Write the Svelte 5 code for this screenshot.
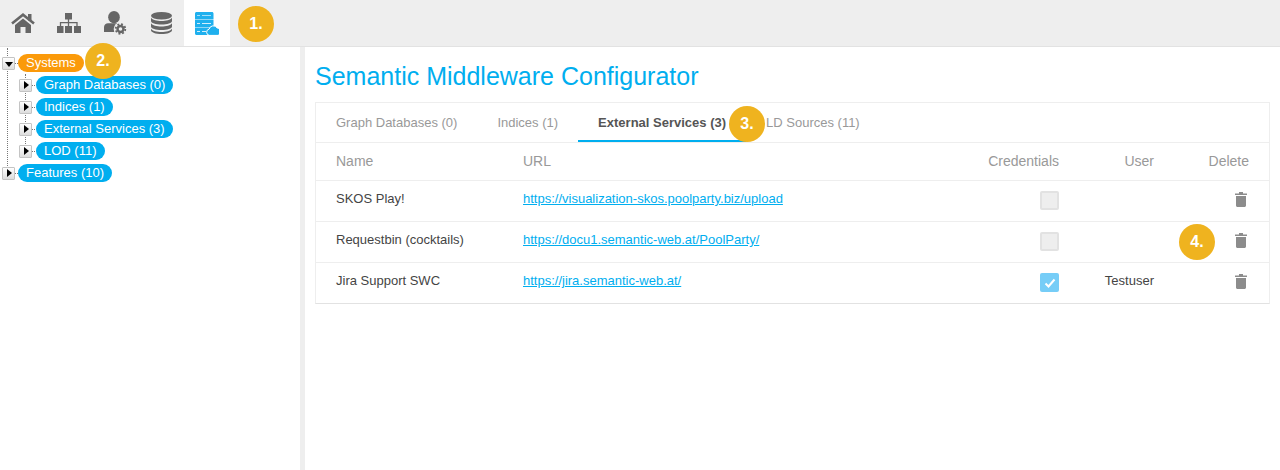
<script>
	const subs = ['Graph Databases (0)', 'Indices (1)', 'External Services (3)', 'LOD (11)'];
	const tabs = ['Graph Databases (0)', 'Indices (1)', 'External Services (3)', 'LD Sources (11)'];
	const rows = [
		{ name: 'SKOS Play!', url: 'https://visualization-skos.poolparty.biz/upload', cred: false, user: '' },
		{ name: 'Requestbin (cocktails)', url: 'https://docu1.semantic-web.at/PoolParty/', cred: false, user: '' },
		{ name: 'Jira Support SWC', url: 'https://jira.semantic-web.at/', cred: true, user: 'Testuser' }
	];
</script>

<div class="page">
	<header class="toolbar">
		<button class="tool" aria-label="Home">
			<svg width="24" height="20" viewBox="0 0 24 20">
				<path fill="#666" d="M17 1h3.500v6.500H17z"/>
				<path fill="none" stroke="#666" stroke-width="2.600" d="M1 10.500 12 1.700l11 8.800"/>
				<path fill="#666" d="M4 12 12 5.500 20 12v8h-5.500v-6h-5v6H4z"/>
			</svg>
		</button>
		<button class="tool" aria-label="Structure">
			<svg width="24" height="20" viewBox="0 0 24 20">
				<path fill="none" stroke="#666" stroke-width="1.300" d="M11.500 5v5M3.500 14V9.700h16.500V14M11.500 9.700V14"/>
				<path fill="#666" d="M8 0h7v6.500H8zM0 13h6.500v7H0zM8 13h7v7H8zM17 13h7v7h-7z"/>
			</svg>
		</button>
		<button class="tool" aria-label="Users">
			<svg width="23" height="24" viewBox="0 0 23 24">
				<ellipse cx="10" cy="6.200" rx="5.800" ry="6.200" fill="#666"/>
				<path fill="#666" d="M0 21v-5c0-2.500 2-3.800 4-3.800h11c2 0 4 1.300 4 3.800v5z"/>
				<circle cx="16.500" cy="18" r="6.800" fill="#eee"/>
				<circle cx="16.500" cy="18" r="3" fill="none" stroke="#666" stroke-width="2.400"/>
				<circle cx="16.500" cy="18" r="4.800" fill="none" stroke="#666" stroke-width="1.800" stroke-dasharray="1.900 1.870"/>
			</svg>
		</button>
		<button class="tool" aria-label="Databases">
			<svg width="21" height="22" viewBox="0 0 21 22">
				<ellipse cx="10.500" cy="3.800" rx="10.500" ry="3.800" fill="#666"/>
				<path fill="#666" d="M0 5.800c1.500 2.300 5.800 3.300 10.500 3.300S19.500 8.100 21 5.800V9c0 2-4.700 3.500-10.500 3.500S0 11 0 9zM0 11.300c1.500 2.300 5.800 3.300 10.500 3.300s9-1 10.500-3.300v3.200c0 2-4.700 3.500-10.500 3.500S0 16.500 0 14.500zM0 16.800c1.500 2.300 5.800 3.300 10.500 3.300s9-1 10.500-3.300v1.400c0 2-4.700 3.800-10.500 3.800S0 20.200 0 18.200z"/>
			</svg>
		</button>
		<button class="tool active" aria-label="Semantic Middleware">
			<svg width="24" height="23" viewBox="0 0 24 23">
				<path fill="#1fb0ee" d="M0 1.500C0 .7.700 0 1.500 0h15.500c.8 0 1.500.7 1.500 1.500V7.400H0zM0 7.900h18.500v7.200H0zM0 15.600h18.500V23H1.500C.7 23 0 22.300 0 21.500z"/>
				<path fill="#fff" opacity="0.8" d="M2 3.200h3v.9H2zM7 3.200h9v.9H7zM2 11h3v.9H2zM7 11h9v.9H7zM2 19h3v.9H2zM7 19h4v.9H7z"/>
				<path fill="#1fb0ee" stroke="#fff" stroke-width="1" d="M14.500 23.400a3.200 3.200 0 0 1-.4-6.300 4.400 4.400 0 0 1 8-1.200 3.800 3.800 0 0 1 .9 7.500z"/>
			</svg>
		</button>
		<span class="step step-1">1.</span>
	</header>

	<div class="body">
		<aside class="tree">
			<ul class="root">
				<li class="node">
					<div class="line">
						<span class="toggle open"></span><span class="pill orange">Systems</span>
						<span class="step step-2">2.</span>
					</div>
					<ul class="children">
						{#each subs as sub}
							<li class="line"><span class="toggle"></span><span class="pill">{sub}</span></li>
						{/each}
					</ul>
				</li>
				<li class="line"><span class="toggle"></span><span class="pill">Features (10)</span></li>
			</ul>
		</aside>

		<main class="content">
			<h1>Semantic Middleware Configurator</h1>
			<section class="panel">
				<nav class="tabs">
					{#each tabs as tab, i}
						<span class="tab" class:selected={i === 2}>{tab}</span>
					{/each}
					<span class="step step-3">3.</span>
				</nav>
				<table>
					<thead>
						<tr>
							<th class="c-name">Name</th>
							<th>URL</th>
							<th class="right">Credentials</th>
							<th class="right c-user">User</th>
							<th class="right c-del">Delete</th>
						</tr>
					</thead>
					<tbody>
						{#each rows as row, i}
							<tr>
								<td class="c-name txt">{row.name}</td>
								<td class="txt"><a href={row.url}>{row.url}</a></td>
								<td class="right">
									<span class="check" class:on={row.cred}>
										{#if row.cred}
											<svg width="12" height="10" viewBox="0 0 12 10"><path d="M1.500 5.500 4.500 8.500 10.500 1.500" fill="none" stroke="#fff" stroke-width="2"/></svg>
										{/if}
									</span>
								</td>
								<td class="right c-user txt">{row.user}</td>
								<td class="right c-del">
									{#if i === 1}<span class="step step-4">4.</span>{/if}
									<svg class="trash" width="12" height="15" viewBox="0 0 12 15"><path fill="#8c8c8c" d="M4 0h4v1.500h4V3H0V1.500h4zM1 4h10v9.500c0 .8-.7 1.500-1.500 1.500h-7C1.700 15 1 14.300 1 13.500z"/></svg>
								</td>
							</tr>
						{/each}
					</tbody>
				</table>
			</section>
		</main>
	</div>
</div>

<style>
	:global(body) {
		margin: 0;
		font-family: 'Liberation Sans', Arial, sans-serif;
		background: #fff;
		color: #444;
	}

	.page {
		height: 470px;
		overflow: hidden;
		display: flex;
		flex-direction: column;
	}

	.toolbar {
		position: relative;
		height: 46px;
		flex: none;
		display: flex;
		background: #eee;
		border-bottom: 1px solid #e2e2e2;
	}

	.tool {
		width: 46px;
		height: 46px;
		padding: 0;
		border: 0;
		background: none;
		display: flex;
		align-items: center;
		justify-content: center;
	}

	.tool.active {
		background: #fff;
	}

	.step {
		position: absolute;
		width: 36px;
		height: 36px;
		border-radius: 50%;
		background: #efb31f;
		color: #fff;
		font-size: 16px;
		font-weight: 700;
		display: flex;
		align-items: center;
		justify-content: center;
		z-index: 2;
	}

	.step-1 {
		left: 238px;
		top: 6px;
	}

	.body {
		flex: 1;
		display: flex;
		min-height: 0;
	}

	.tree {
		width: 305px;
		flex: none;
		box-sizing: border-box;
		padding: 5px 0 0 2px;
		border-right: 5px solid #eee;
	}

	.tree ul {
		list-style: none;
		margin: 0;
		padding: 0;
	}

	.root {
		position: relative;
	}

	.root::before {
		content: '';
		position: absolute;
		left: 5px;
		top: -4px;
		height: 122px;
		border-left: 1px dotted #777;
	}

	.tree .children {
		position: relative;
		margin-left: 17px;
	}

	.children::before {
		content: '';
		position: absolute;
		left: 6px;
		top: 0;
		height: 78px;
		border-left: 1px dotted #777;
	}

	.line {
		position: relative;
		height: 22px;
		display: flex;
		align-items: center;
	}

	.toggle {
		position: relative;
		box-sizing: border-box;
		width: 13px;
		height: 13px;
		margin-right: 3px;
		border: 1px solid #c4c4c4;
		border-radius: 1px;
		background: linear-gradient(#fff, #ddd);
		flex: none;
		z-index: 1;
	}

	.children .toggle {
		margin-right: 4px;
	}

	.toggle::before {
		content: '';
		position: absolute;
		left: 12px;
		top: 5px;
		width: 3px;
		border-top: 1px dotted #777;
	}

	.toggle::after {
		content: '';
		position: absolute;
		left: 4px;
		top: 1px;
		border-style: solid;
		border-width: 4.500px 0 4.500px 5px;
		border-color: transparent transparent transparent #000;
	}

	.toggle.open::after {
		left: 1.500px;
		top: 4px;
		border-width: 5px 4.500px 0;
		border-color: #000 transparent transparent;
	}

	.pill {
		height: 18px;
		line-height: 18px;
		padding: 0 8px;
		border-radius: 9px;
		background: #00aeef;
		color: #fff;
		font-size: 13px;
		white-space: nowrap;
	}

	.pill.orange {
		background: #fb9a0a;
	}

	.step-2 {
		left: 83px;
		top: -9px;
	}

	.content {
		flex: 1;
		min-width: 0;
		padding: 0 10px 0 10px;
	}

	h1 {
		margin: 15px 0 11px;
		font-size: 25px;
		line-height: 29px;
		font-weight: 400;
		color: #00aeef;
	}

	.panel {
		border: 1px solid #eee;
		border-bottom-color: #e2e2e2;
	}

	.tabs {
		position: relative;
		height: 39px;
		display: flex;
		border-bottom: 1px solid #eee;
	}

	.tab {
		padding: 0 20px;
		line-height: 39px;
		font-size: 13px;
		color: #999;
		white-space: nowrap;
	}

	.tab.selected {
		color: #555;
		font-weight: 700;
		height: 37px;
		border-bottom: 2px solid #00aeef;
	}

	.step-3 {
		left: 413px;
		top: 3px;
	}

	table {
		width: 100%;
		border-collapse: collapse;
		font-size: 13px;
	}

	th {
		box-sizing: border-box;
		height: 37px;
		font-weight: 400;
		font-size: 14px;
		color: #999;
		text-align: left;
		padding: 0 20px 0 0;
		border-bottom: 1px solid #eee;
	}

	td {
		box-sizing: border-box;
		height: 41px;
		padding: 0 20px 0 0;
		border-bottom: 1px solid #eee;
		color: #444;
	}

	td.txt {
		padding-bottom: 4px;
	}

	tbody tr:last-child td {
		border-bottom: 0;
	}

	.c-name {
		width: 207px;
		box-sizing: border-box;
		padding-left: 20px;
	}

	.right {
		text-align: right;
	}

	.c-user {
		width: 95px;
		box-sizing: border-box;
	}

	.c-del {
		position: relative;
		width: 95px;
		box-sizing: border-box;
	}

	td.c-del {
		padding-right: 22px;
		padding-bottom: 3px;
	}

	a {
		color: #00aeef;
	}

	.check {
		display: inline-flex;
		align-items: center;
		justify-content: center;
		box-sizing: border-box;
		width: 19px;
		height: 19px;
		vertical-align: middle;
		border: 2px solid #e2e2e2;
		border-radius: 2px;
		background: #eee;
	}

	.check.on {
		border: 0;
		background: #76cdf7;
	}

	.trash {
		vertical-align: middle;
	}

	.step-4 {
		left: 5px;
		top: 2px;
	}
</style>
